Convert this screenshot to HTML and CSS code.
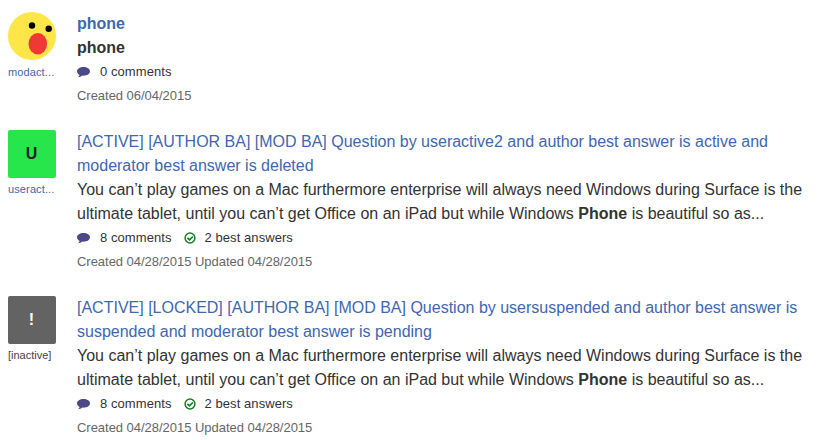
FILE: index.html
```html
<!DOCTYPE html>
<html lang="en"><head><meta charset="utf-8"><title>Search results</title><link rel="stylesheet" href="styles.css"></head>
<body>
<svg width="0" height="0" class="defs"><defs>
<symbol id="bubble" viewBox="0 0 13 12"><path d="M6.500 1C2.900 1 0 2.900 0 5.300c0 1.500 1 2.800 2.600 3.600-.2.900-.8 1.700-1.700 2.400 1.800-.1 3.200-.7 4.300-1.700l1.300.1c3.600 0 6.500-1.900 6.500-4.400S10.100 1 6.500 1z"/></symbol>
<symbol id="check" viewBox="0 0 12 12"><circle cx="6" cy="6" r="4.900" fill="none" stroke="currentColor" stroke-width="1.500"/><path d="M3.400 5.800L5.500 7.900 8.900 4.500" fill="none" stroke="currentColor" stroke-width="1.700"/></symbol>
</defs></svg>
<main class="results">
<article class="result">
<div class="author"><svg class="avatar round" viewBox="0 0 48 48"><circle cx="24" cy="24" r="24" fill="#fee548"/><circle cx="24" cy="13.500" r="3.200"/><circle cx="40.700" cy="16.700" r="3.200"/><ellipse cx="29.800" cy="31.800" rx="9.300" ry="10.700" fill="#f03835"/></svg><a class="name">modact...</a></div>
<div class="body"><h2 class="title"><b>phone</b></h2><p class="text"><b>phone</b></p><div class="meta"><svg class="bubble"><use href="#bubble"/></svg><span>0 comments</span></div><div class="dates">Created 06/04/2015</div></div>
</article>
<article class="result">
<div class="author"><div class="avatar green">U</div><a class="name raised">useract...</a></div>
<div class="body"><h2 class="title">[ACTIVE] [AUTHOR BA] [MOD BA] Question by useractive2 and author best answer is active and<br>moderator best answer is deleted</h2><p class="text">You can’t play games on a Mac furthermore enterprise will always need Windows during Surface is the<br>ultimate tablet, until you can’t get Office on an iPad but while Windows <b>Phone</b> is beautiful so as...</p><div class="meta"><svg class="bubble"><use href="#bubble"/></svg><span>8 comments</span><svg class="check"><use href="#check"/></svg><span>2 best answers</span></div><div class="dates">Created 04/28/2015 Updated 04/28/2015</div></div>
</article>
<article class="result">
<div class="author"><div class="avatar gray">!</div><span class="name raised inactive">[inactive]</span></div>
<div class="body"><h2 class="title">[ACTIVE] [LOCKED] [AUTHOR BA] [MOD BA] Question by usersuspended and author best answer is<br>suspended and moderator best answer is pending</h2><p class="text">You can’t play games on a Mac furthermore enterprise will always need Windows during Surface is the<br>ultimate tablet, until you can’t get Office on an iPad but while Windows <b>Phone</b> is beautiful so as...</p><div class="meta"><svg class="bubble"><use href="#bubble"/></svg><span>8 comments</span><svg class="check"><use href="#check"/></svg><span>2 best answers</span></div><div class="dates">Created 04/28/2015 Updated 04/28/2015</div></div>
</article>
</main></body></html>
```
FILE: styles.css
```css
* { box-sizing: border-box; }
body { margin: 0; background: #fff; color: #333; font: 16px/24px "Liberation Sans", Arial, sans-serif; overflow: hidden; }
.defs { display: block; }
.results { display: flex; flex-direction: column; gap: 22px; padding: 12px 0 0 8px; }
.result { display: flex; gap: 21px; }
.author { width: 48px; flex: none; }
.avatar { display: flex; width: 48px; height: 48px; border-radius: 2px; align-items: center; justify-content: center; font-weight: bold; padding-right: 1px; }
.round { display: block; padding: 0; }
.green { background: #26e64b; color: #222; }
.gray { background: #636363; color: #fff; }
.name { display: block; font-size: 11px; line-height: 24px; letter-spacing: .12px; color: #4067a8; white-space: nowrap; }
.raised { line-height: 22px; }
.inactive { color: #444; letter-spacing: 0; }
.body { flex: 1; white-space: nowrap; }
.title, .text { margin: 0; font-size: 16px; font-weight: normal; }
.title { color: #4067b0; }
.meta { display: flex; align-items: center; height: 24px; font-size: 13px; letter-spacing: .07px; }
.bubble { width: 13px; height: 12px; margin-right: 10px; fill: #4b4a87; }
.check { width: 12px; height: 12px; margin: 0 9px 0 12px; color: #168021; }
.dates { font-size: 13px; color: #666; letter-spacing: -.03px; }
```
